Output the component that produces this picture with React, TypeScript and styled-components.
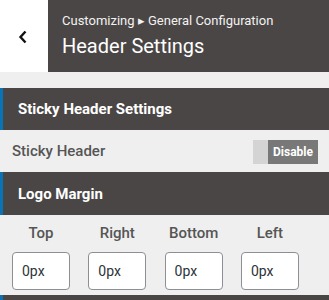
import React from 'react';
import styled, { createGlobalStyle } from 'styled-components';

const GlobalStyle = createGlobalStyle`
  html, body {
    margin: 0;
    padding: 0;
    background: #efefef;
    font-family: Roboto, "Liberation Sans", Arial, sans-serif;
  }
`;

const App = () => {
  const sides = ['Top', 'Right', 'Bottom', 'Left'];

  return (
    <Panel>
      <GlobalStyle />
      <Header>
        <BackButton aria-label="Back">
          <svg width="10" height="14" viewBox="0 0 10 14" fill="none">
            <path d="M7.5 1.5 L2.5 7 L7.5 12.5" stroke="#111" strokeWidth="2.4" />
          </svg>
        </BackButton>
        <TitleBlock>
          <Breadcrumb>Customizing ▸ General Configuration</Breadcrumb>
          <Title>Header Settings</Title>
        </TitleBlock>
      </Header>

      <Spacer />

      <SectionTitle>Sticky Header Settings</SectionTitle>
      <Row>
        <RowLabel>Sticky Header</RowLabel>
        <Toggle>
          <ToggleKnob />
          <ToggleText>Disable</ToggleText>
        </Toggle>
      </Row>

      <SectionTitle $tall>Logo Margin</SectionTitle>
      <MarginGrid>
        {sides.map((side) => (
          <MarginField key={side}>
            <FieldLabel>{side}</FieldLabel>
            <FieldInput defaultValue="0px" />
          </MarginField>
        ))}
      </MarginGrid>

      <SectionTitle>&nbsp;</SectionTitle>
    </Panel>
  );
};

const Panel = styled.div`
  width: 329px;
  height: 300px;
  overflow: hidden;
  background: #efefef;
`;

const Header = styled.div`
  display: flex;
  height: 72px;
  background: #4a4645;
`;

const BackButton = styled.div`
  width: 48px;
  flex-shrink: 0;
  background: #fff;
  display: flex;
  align-items: center;
  justify-content: center;
  padding-top: 1px;
  padding-right: 2px;
  box-sizing: border-box;
`;

const TitleBlock = styled.div`
  padding: 12px 0 0 14px;
  color: #fff;
`;

const Breadcrumb = styled.div`
  font-size: 13px;
  line-height: 18px;
  color: #f2f2f2;
`;

const Title = styled.div`
  margin-top: 3px;
  font-size: 20px;
  line-height: 26px;
`;

const Spacer = styled.div`
  height: 16px;
`;

const SectionTitle = styled.div<{ $tall?: boolean }>`
  height: ${(p) => (p.$tall ? 43 : 42)}px;
  box-sizing: border-box;
  display: flex;
  align-items: center;
  padding-left: 15px;
  border-left: 3px solid #0a73b5;
  background: #4a4645;
  color: #fff;
  font-size: 15px;
  font-weight: 700;
`;

const Row = styled.div`
  height: 42px;
  display: flex;
  align-items: center;
  justify-content: space-between;
  padding: 0 11px 0 12px;
`;

const RowLabel = styled.span`
  font-size: 15px;
  font-weight: 500;
  color: #555;
`;

const Toggle = styled.div`
  display: flex;
  height: 24px;
  width: 65px;
  margin-top: 1px;
`;

const ToggleKnob = styled.span`
  width: 15px;
  background: #d4d4d4;
`;

const ToggleText = styled.span`
  flex: 1;
  display: flex;
  align-items: center;
  justify-content: center;
  background: #787878;
  color: #fff;
  font-size: 12px;
  font-weight: 700;
`;

const MarginGrid = styled.div`
  display: grid;
  grid-template-columns: repeat(4, 58px);
  column-gap: 18.3px;
  padding: 8px 0 5px 12px;
`;

const MarginField = styled.div`
  display: flex;
  flex-direction: column;
  align-items: center;
`;

const FieldLabel = styled.span`
  height: 20px;
  line-height: 20px;
  margin-bottom: 9px;
  font-size: 15px;
  font-weight: 500;
  color: #555;
`;

const FieldInput = styled.input`
  width: 58px;
  height: 38px;
  box-sizing: border-box;
  padding: 0 0 0 9px;
  border: 1px solid #8c8f94;
  border-radius: 4px;
  background: #fff;
  font-family: Roboto, "Liberation Sans", Arial, sans-serif;
  font-size: 14px;
  color: #2c3338;
  outline: none;
`;

export default App;
